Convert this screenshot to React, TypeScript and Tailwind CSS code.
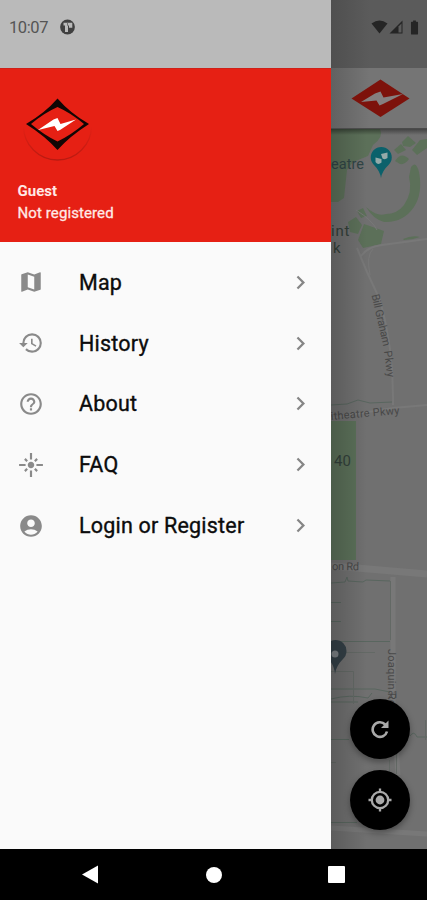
import type { IconType } from "react-icons";
import {
  MdAccountCircle,
  MdBatteryFull,
  MdChevronRight,
  MdFlare,
  MdHelpOutline,
  MdHistory,
  MdMap,
} from "react-icons/md";

const items: { label: string; Icon: IconType }[] = [
  { label: "Map", Icon: MdMap },
  { label: "History", Icon: MdHistory },
  { label: "About", Icon: MdHelpOutline },
  { label: "FAQ", Icon: MdFlare },
  { label: "Login or Register", Icon: MdAccountCircle },
];

function Drawer() {
  return (
    <aside className="flex w-[331px] shrink-0 flex-col bg-[#fafafa]">
      <div className="flex h-[68px] items-start bg-[#bababa] pt-[18px] pl-[9px] text-[#555]">
        <span className="w-[51px] text-[16.5px] leading-[20px] tracking-[-0.4px]">10:07</span>
        <svg className="mt-[1px]" width="16" height="16" viewBox="0 0 16 16">
          <circle cx="7.5" cy="8" r="7.4" fill="#404040" />
          <path d="M3.5 3.8h8.8v5H9V6.500H8v6.500H5V6.500H3.500z" fill="#bababa" />
          <path d="M7 3.800h1v3H7z" fill="#707070" />
        </svg>
      </div>
      <div className="flex h-[174px] flex-col border-t border-[#cf2018] bg-[#e62014] pl-[17.5px] text-[#ffe9e6]">
        <svg className="mt-[18px] ml-[2.5px] shrink-0" width="76" height="80" viewBox="20 87 76 80">
          <defs>
            <linearGradient id="rim" x1="0" y1="0" x2="0" y2="1">
              <stop offset="0.5" stopColor="#a91810" stopOpacity="0" />
              <stop offset="1" stopColor="#a91810" stopOpacity="0.75" />
            </linearGradient>
          </defs>
          <circle cx="57.5" cy="126" r="34" fill="none" stroke="url(#rim)" strokeWidth="1.3" />
          <path d="M57.5 98.5Q70 113 89 124Q70 136 57.5 150Q45 136 26 124Q45 113 57.5 98.5z" fill="#120604" />
          <path d="M57.5 107Q71 113 84 124Q71 135 57.5 141.5Q44 135 31 124Q44 113 57.5 107z" fill="#e62014" />
          <path d="M38 130L53.5 119.5L57.5 118L60.5 124L76 119.5L60 130L57.5 131L54.5 126z" fill="#fff" />
        </svg>
        <div className="mt-[14px] text-[15px] leading-[21px] font-bold">Guest</div>
        <div className="text-[15px] leading-[22px] tracking-[0.1px] [-webkit-text-stroke:0.3px_#ffe9e6]">Not registered</div>
      </div>
      <nav className="flex flex-col pt-[10px]">
        {items.map(({ label, Icon }) => (
          <a key={label} className="flex h-[60.8px] items-center pr-[17px] pl-[18px] text-[#0c0c0c]">
            <Icon size={26} className="shrink-0 text-[#8a8a8a]" />
            <span className="ml-[35px] flex-1 pt-[1px] text-[21.5px] leading-[28px] tracking-[0.2px] whitespace-nowrap [-webkit-text-stroke:0.35px_#0c0c0c]">{label}</span>
            <MdChevronRight size={27} className="shrink-0 text-[#858585]" />
          </a>
        ))}
      </nav>
    </aside>
  );
}

function MapCanvas() {
  return (
    <svg width="96" height="720" viewBox="331 129 96 720" className="block">
      <defs>
        <linearGradient id="edge">
          <stop offset="0" stopColor="#000" stopOpacity="0.18" />
          <stop offset="1" stopColor="#000" stopOpacity="0" />
        </linearGradient>
        <linearGradient id="barShadow" x1="0" y1="0" x2="0" y2="1">
          <stop offset="0" stopColor="#000" stopOpacity="0.4" />
          <stop offset="1" stopColor="#000" stopOpacity="0" />
        </linearGradient>
      </defs>
      <rect x="331" y="129" width="96" height="720" fill="#707070" />
      {/* parks */}
      <g fill="#5c7059">
        <path d="M331 129H380Q384 137 373 145L368 156L353 162L347 170L344 198L338 202H331z" />
        <path d="M402 142L408 136L416 143L410 147L403 146z" />
        <path d="M394 150L401 144L406 150L398 154z" />
        <path d="M395 161Q401 151 409 159Q405 165 400 164z" />
        <path d="M412 150L420 140L427 139V148L417 155z" />
        <path d="M411 167Q416 160 419 172Q423 193 414 207Q403 223 384 222Q373 219 366 207Q377 217 386 214Q397 214 404 205Q413 192 409 177z" />
        <path d="M357 211L363 208L367 216L361 218z" />
        <path d="M348 222L356 217L362 225L358 234L350 232z" />
        <path d="M364 224L384 231L381 244L363 248L358 240z" />
        <path d="M403 239Q412 235 420 237Q412 240 404 240z" />
      </g>
      <rect x="331" y="421" width="25" height="139" fill="#5b7059" />
      {/* roads */}
      <g fill="none" stroke="#787878">
        <path d="M361 256Q367 247 382 245L427 239M357 248L367 272L380 300Q394 350 393 405M331 418L393 408L427 405" strokeWidth="2" />
        <path d="M370 275Q366 255 373 249M356 210Q372 220 377 230" strokeWidth="1" />
        <path d="M331 566L357 568L427 574" strokeWidth="7" />
        <path d="M393 577V700L398 775" strokeWidth="5" />
        <path d="M331 828L427 834" strokeWidth="5" />
      </g>
      <g fill="none" stroke="#59665f" strokeWidth="1">
        <path d="M331 405L347 404L358 400L370 403L392 402" />
        <path d="M331 583L345 582L347 577L348 581L363 582L366 580L390 581M331 602.5H341M331 621.5H341M331 641.5H390M331 689L375 689L390 692M331 699Q350 694 368 698L372 693M331 702H358M331 739.5H349M410 736Q414 730 417 737H427M331 822.5H357" />
      </g>
      <g fill="none" stroke="#636965" strokeWidth="1">
        <path d="M390.5 581V640M331 652.5H375M331 671.5H353.5V704M331 762.5H336M389.5 760V774M396.5 752V774M425.5 720V740" />
      </g>
      {/* place labels */}
      <g className="font-['Roboto',sans-serif]">
        <text x="331" y="169" fontSize="14.5" fill="#304546" textLength="33">eatre</text>
        <text x="331" y="236" fontSize="15" fill="#344039" textLength="18.5">int</text>
        <text x="333" y="253" fontSize="15" fill="#344039">k</text>
        <text x="334" y="466" fontSize="15" fill="#33413b">40</text>
        <g fontSize="11" fill="#484848">
          <text x="332" y="570" transform="rotate(1 332 570)" textLength="27">on Rd</text>
          <text x="331" y="420" transform="rotate(-5 331 420)" textLength="69">itheatre Pkwy</text>
          <text transform="translate(371.5 295) rotate(77)" textLength="53">Bill Graham</text>
          <text transform="translate(384 351) rotate(83)" textLength="27">Pkwy</text>
          <text transform="translate(388 649) rotate(90)" textLength="57">Joaquin Rd</text>
          <text x="388" y="698" fontSize="9">21</text>
        </g>
      </g>
      {/* pins */}
      <path d="M381 178Q380 171 374 165A10.5 10.5 0 1 1 388.5 165Q382 171 381 178z" fill="#0b616b" />
      <path d="M375.5 157.5L381.5 159V162.5Q378 165.5 375.5 162zM381 154L387.5 152.5V158Q385 160 382.5 158.5z" fill="#94aaa9" />
      <path d="M335 674Q334 664 328 659A11 11 0 1 1 343 659Q336 666 335 674z" fill="#344047" />
      <circle cx="335" cy="654" r="3.5" fill="#7c8185" />
      <rect x="331" y="129" width="36" height="720" fill="url(#edge)" />
      <rect x="331" y="129" width="96" height="6" fill="url(#barShadow)" />
    </svg>
  );
}

function RefreshIcon() {
  return (
    <svg width="20" height="20" viewBox="0 0 20 20" fill="none">
      <path d="M15.200 5.500A7.300 7.300 0 1 0 17 12.500" stroke="currentColor" strokeWidth="2.600" />
      <path d="M18.500 1.500V9H11z" fill="currentColor" />
    </svg>
  );
}

function LocateIcon() {
  return (
    <svg width="24" height="24" viewBox="0 0 24 24" fill="none" stroke="currentColor">
      <circle cx="12" cy="12" r="8.200" strokeWidth="2.300" />
      <path d="M12 0.500V4M12 20V23.500M0.500 12H4M20 12H23.500" strokeWidth="2.300" />
      <circle cx="12" cy="12" r="4.400" fill="currentColor" stroke="none" />
    </svg>
  );
}

function MapPane() {
  return (
    <section className="relative flex w-[96px] flex-col bg-[#707070]">
      <div className="flex h-[68px] items-start bg-[#585858] bg-linear-to-r from-[#4f4f4f] to-[#5b5b5b] to-40% pt-[19px] pl-[40px] text-[#252525]">
        <svg width="33" height="16" viewBox="0 0 33 16">
          <path d="M0.5 4.5Q8.5 -1.5 16.5 4.5L8.5 14.5z" fill="#252525" />
          <path d="M18.500 14.500L31.500 1.500V14.500z" fill="#252525" />
          <path d="M27.500 7.500L30.500 4.500V13.500H27.500z" fill="#5b5b5b" />
        </svg>
        <MdBatteryFull size={17} className="ml-[2px] shrink-0" />
      </div>
      <div className="h-[61px] border-b border-[#4b4b4b] bg-linear-to-r from-[#616161] to-[#757575] to-40% pt-[11px] pl-[20px]">
        <svg width="59" height="38" viewBox="0 0 59 38">
          <path d="M29.5 0.5L58.5 19.5L29.5 38L0.5 19.5z" fill="#7d120b" />
          <path d="M10 23L24 14.5L29.5 12.5L32.5 18.5L52 15L32 25L28.5 26.5L25.5 21.5z" fill="#858080" />
        </svg>
      </div>
      <MapCanvas />
      <div className="absolute top-[699px] left-[19px] flex flex-col gap-[11px] text-[#a9a9a9]">
        <button className="flex size-[60px] items-center justify-center rounded-full bg-black shadow-[0_3px_6px_rgba(0,0,0,0.35)]">
          <RefreshIcon />
        </button>
        <button className="flex size-[60px] items-center justify-center rounded-full bg-black shadow-[0_3px_6px_rgba(0,0,0,0.35)]">
          <LocateIcon />
        </button>
      </div>
    </section>
  );
}

export default function App() {
  return (
    <div className="flex h-[900px] w-[427px] flex-col overflow-hidden bg-black font-['Roboto',sans-serif]">
      <main className="flex h-[849px] overflow-hidden">
        <Drawer />
        <MapPane />
      </main>
      <footer className="flex h-[51px] items-center justify-between pr-[82px] pl-[82px] text-white">
        <svg width="17" height="19" viewBox="0 0 17 19">
          <path d="M0 9.5L16 0.5V18.5z" fill="currentColor" />
        </svg>
        <span className="size-[16px] rounded-full bg-white" />
        <span className="size-[17px] rounded-[1px] bg-white" />
      </footer>
    </div>
  );
}
